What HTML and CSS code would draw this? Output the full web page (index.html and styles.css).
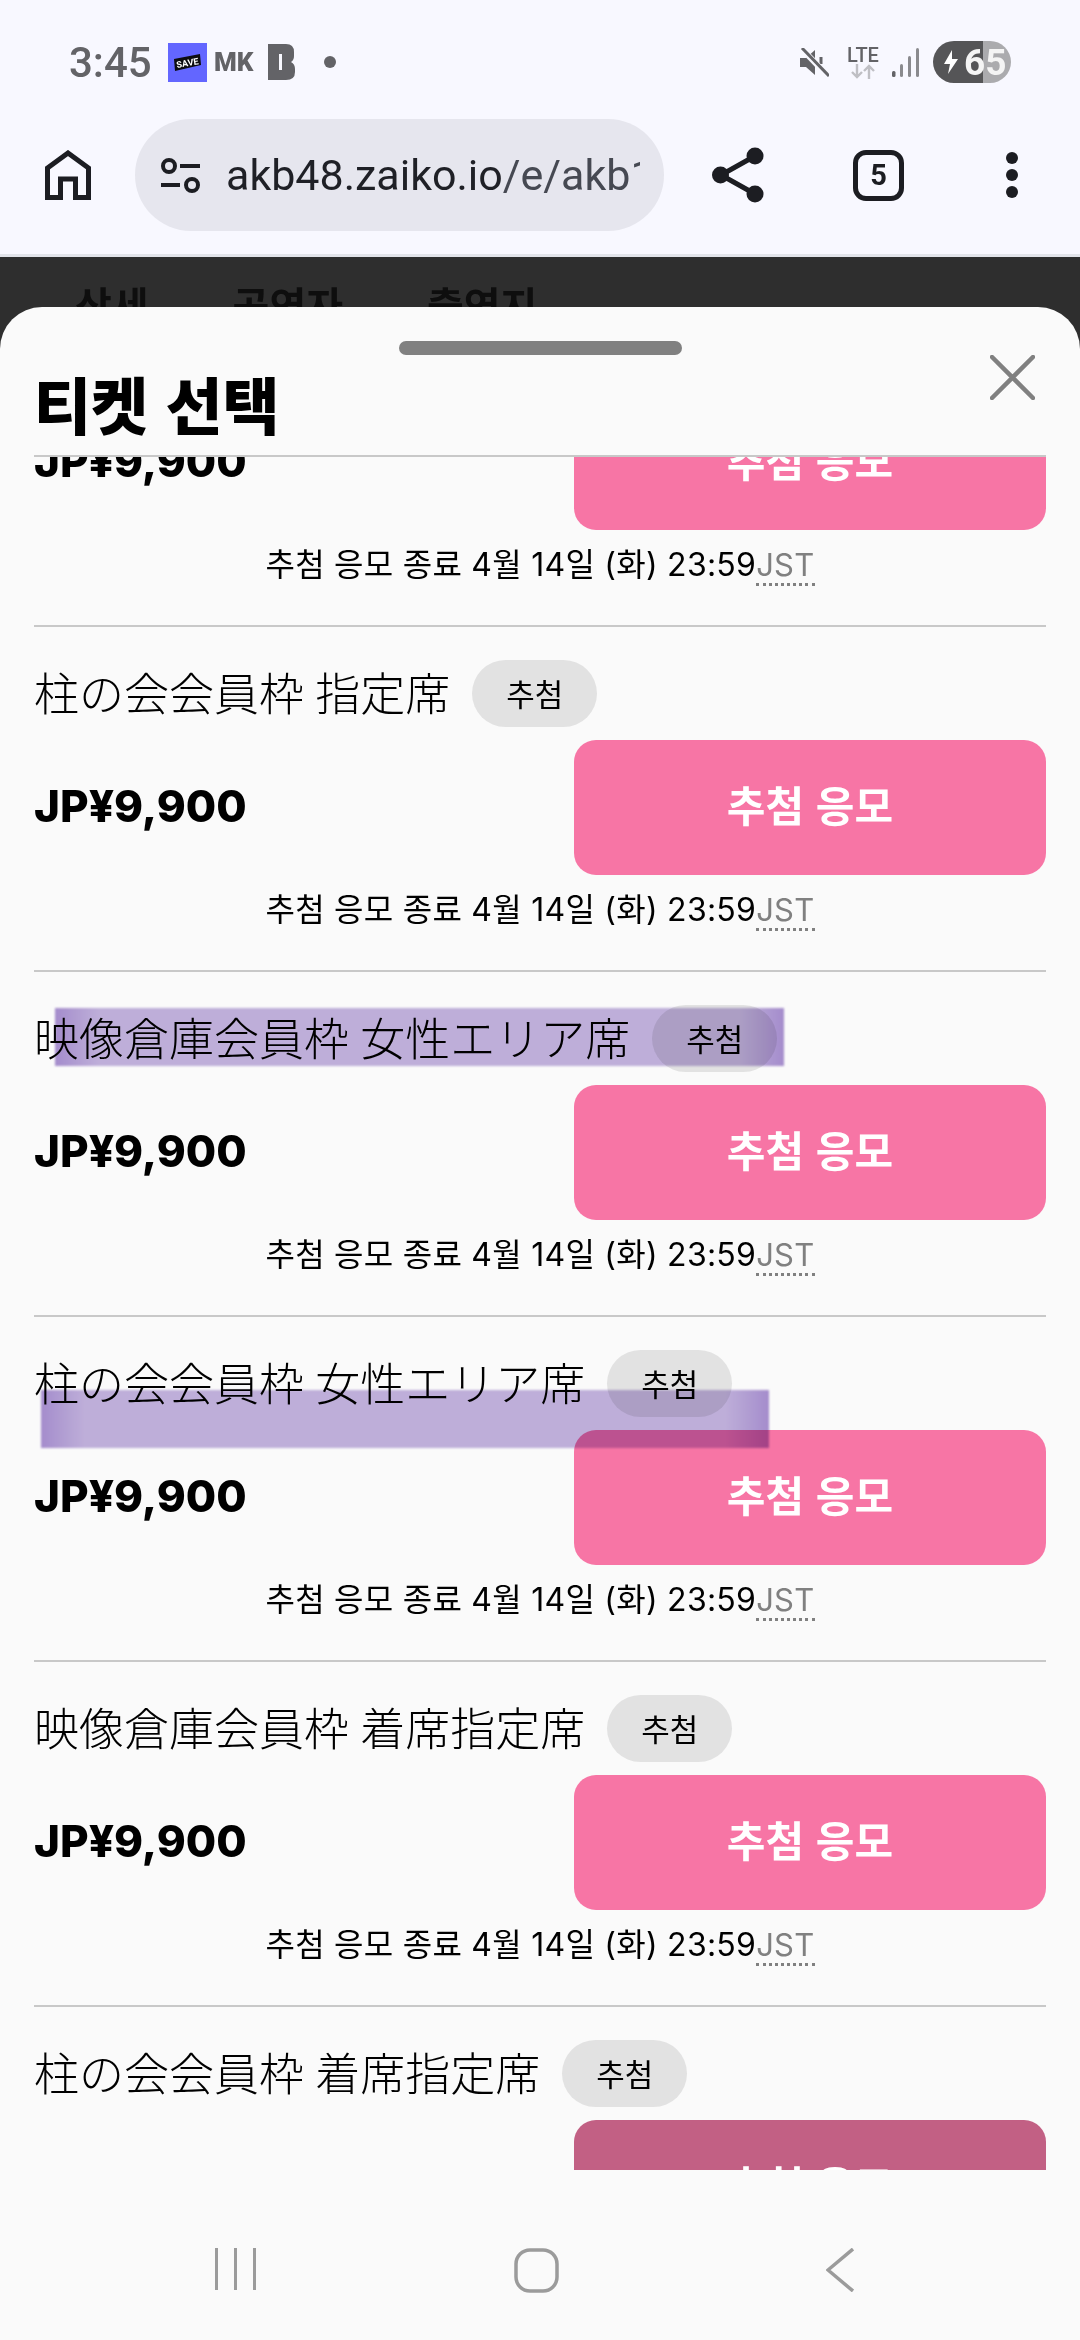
FILE: index.html
```html
<!DOCTYPE html>
<html lang="ko">
	<head>
		<meta charset="utf-8">
		<title>티켓 선택</title>
		<link rel="stylesheet" href="styles.css">
	</head>
	<body>
		<header class="chrome">
			<div class="status">
				<div class="status-left">
					<span class="time">3:45</span>
					<svg class="ic-save" width="39" height="39" viewBox="0 0 39 39">
						<rect width="39" height="39" fill="#6366ff"/>
						<polygon points="6,16 32,11 33,22 7,28" fill="#0c0c10"/>
						<text x="19.5" y="23" font-size="9" font-weight="700" font-family="Roboto" fill="#fff" text-anchor="middle" transform="rotate(-10 19.5 20)">SAVE</text>
					</svg>
					<span class="mk">MK</span>
					<svg class="ic-b" width="27" height="36" viewBox="0 0 27 36">
						<path d="M0 0H18Q26 0 26 8V12Q26 16 23 18Q27 20 27 25V28Q27 36 18 36H0Z" fill="#636367"/>
						<rect x="11" y="10" width="3" height="16" fill="#f8f8ff"/>
					</svg>
					<span class="dot"></span>
				</div>
				<div class="status-right">
					<svg width="29" height="29" viewBox="0 0 29 29">
						<path d="M0 10H6L15 2V27L6 19H0Z" fill="#636367"/>
						<path d="M21 9V16" stroke="#636367" stroke-width="3"/>
						<path d="M2 1L28 28" stroke="#f8f8ff" stroke-width="6"/>
						<path d="M2 0L29 28" stroke="#636367" stroke-width="3"/>
					</svg>
					<div class="lte">
						<span>LTE</span>
						<svg width="24" height="15" viewBox="0 0 24 15">
							<path d="M6 0V13M1 8L6 13L11 8M18 15V2M13 7L18 2L23 7" fill="none" stroke="#bfbfc4" stroke-width="2.4"/>
						</svg>
					</div>
					<svg class="ic-signal" width="27" height="29" viewBox="0 0 27 29">
						<rect x="0" y="23" width="3.5" height="6" rx="1.5" fill="#636367"/>
						<rect x="8" y="16" width="3" height="13" rx="1.5" fill="#8a8a8e"/>
						<rect x="16" y="8" width="3" height="21" rx="1.5" fill="#8a8a8e"/>
						<rect x="24" y="0" width="3" height="29" rx="1.5" fill="#8a8a8e"/>
					</svg>
					<div class="battery">
						<svg width="14" height="24" viewBox="0 0 14 24"><path d="M8 0L0 14H6L4 24L14 9H8Z" fill="#fff"/></svg>
						<span class="battery-num">65</span>
					</div>
				</div>
			</div>
			<div class="toolbar">
				<svg class="ic-home" width="46" height="50" viewBox="0 0 46 50">
					<path d="M2.5 47.5V18L23 3L43.5 18V47.5H30.5V29H15.5V47.5Z" fill="none" stroke="#1c1d22" stroke-width="5"/>
				</svg>
				<div class="url">
					<svg width="42" height="35" viewBox="0 0 42 35">
						<circle cx="10" cy="8" r="6" fill="none" stroke="#1c1d22" stroke-width="4"/>
						<path d="M21 8H41M2 27H21" stroke="#1c1d22" stroke-width="4"/>
						<circle cx="33" cy="27" r="6" fill="none" stroke="#1c1d22" stroke-width="4"/>
					</svg>
					<div class="url-text">akb48.zaiko.io<span class="url-path">/e/akb1</span></div>
				</div>
				<svg class="ic-share" width="52" height="56" viewBox="0 0 52 56">
					<path d="M43 9L9 28L43 47" fill="none" stroke="#1c1d22" stroke-width="5"/>
					<circle cx="43" cy="9" r="8.5" fill="#1c1d22"/>
					<circle cx="8.5" cy="28" r="8.5" fill="#1c1d22"/>
					<circle cx="43" cy="47" r="8.5" fill="#1c1d22"/>
				</svg>
				<div class="tabs-count">5</div>
				<div class="more"><i></i><i></i><i></i></div>
			</div>
		</header>

		<div class="page">
			<nav class="page-tabs">
				<span>상세</span>
				<span>공연자</span>
				<span>출연지</span>
			</nav>
			<section class="sheet">
				<div class="handle"></div>
				<div class="sheet-head">
					<h1>티켓 선택</h1>
					<svg class="ic-close" width="45" height="45" viewBox="0 0 45 45">
						<path d="M2 2L43 43M43 2L2 43" stroke="#808080" stroke-width="4.5" stroke-linecap="round"/>
					</svg>
				</div>
				<div class="list">
					<div class="list-inner">
						<article class="ticket">
							<div class="ticket-name"><span>柱の会会員枠 指定席</span><em class="pill">추첨</em></div>
							<div class="ticket-buy"><b class="price">JP¥9,900</b><button class="apply">추첨 응모</button></div>
							<p class="deadline">추첨 응모 종료 4월 14일 (화) 23:59<abbr>JST</abbr></p>
						</article>
						<article class="ticket">
							<div class="ticket-name"><span>柱の会会員枠 指定席</span><em class="pill">추첨</em></div>
							<div class="ticket-buy"><b class="price">JP¥9,900</b><button class="apply">추첨 응모</button></div>
							<p class="deadline">추첨 응모 종료 4월 14일 (화) 23:59<abbr>JST</abbr></p>
						</article>
						<article class="ticket">
							<div class="ticket-name"><span>映像倉庫会員枠 女性エリア席</span><em class="pill">추첨</em></div>
							<div class="ticket-buy"><b class="price">JP¥9,900</b><button class="apply">추첨 응모</button></div>
							<p class="deadline">추첨 응모 종료 4월 14일 (화) 23:59<abbr>JST</abbr></p>
							<div class="redact redact-a"></div>
						</article>
						<article class="ticket">
							<div class="ticket-name"><span>柱の会会員枠 女性エリア席</span><em class="pill">추첨</em></div>
							<div class="ticket-buy"><b class="price">JP¥9,900</b><button class="apply">추첨 응모</button></div>
							<p class="deadline">추첨 응모 종료 4월 14일 (화) 23:59<abbr>JST</abbr></p>
							<div class="redact redact-b"></div>
						</article>
						<article class="ticket">
							<div class="ticket-name"><span>映像倉庫会員枠 着席指定席</span><em class="pill">추첨</em></div>
							<div class="ticket-buy"><b class="price">JP¥9,900</b><button class="apply">추첨 응모</button></div>
							<p class="deadline">추첨 응모 종료 4월 14일 (화) 23:59<abbr>JST</abbr></p>
						</article>
						<article class="ticket">
							<div class="ticket-name"><span>柱の会会員枠 着席指定席</span><em class="pill">추첨</em></div>
							<div class="ticket-buy"><b class="price">JP¥9,900</b><button class="apply apply-dim">추첨 응모</button></div>
						</article>
					</div>
				</div>
				<footer class="navbar">
					<svg width="41" height="42" viewBox="0 0 41 42">
						<path d="M1.5 0V42M20.5 0V42M39.5 0V42" stroke="#9b9b9b" stroke-width="3"/>
					</svg>
					<svg class="nav-home" width="45" height="45" viewBox="0 0 45 45">
						<rect x="2" y="2" width="41" height="41" rx="14" fill="none" stroke="#9b9b9b" stroke-width="3.5"/>
					</svg>
					<svg width="28" height="44" viewBox="0 0 28 44">
						<path d="M27 1L2 22L27 43" fill="none" stroke="#9b9b9b" stroke-width="3.5"/>
					</svg>
				</footer>
			</section>
		</div>
	</body>
</html>
```

FILE: styles.css
```css
/*   #f8f8ff; /*browser bar*/
/*   #2e2e2e; /*page behind the sheet*/
/*   #fafafa; /*sheet*/
/*   #f775a5; /*button pink*/
*{
	box-sizing: border-box;
}
body{
	width:1080px;
	height:2340px;
	margin:0;
	display:flex;
	flex-direction:column;
	overflow:hidden;
	font-family:"Inter","Noto Sans CJK KR",sans-serif;
	color:#000;
	background-color:#fafafa;
}
.chrome{
	height:257px;
	padding-top:41px;
	background-color:#f8f8ff;
	border-bottom:3px solid #e2e4ea;
}

/* status bar */
.status{
	height:42px;
	padding:0 69px 0 69px;
	display:flex;
	justify-content:space-between;
	align-items:center;
}
.status-left{
	display:flex;
	align-items:center;
}
.time{
	width:99px;
	font-family:Roboto,sans-serif;
	font-size:42px;
	font-weight:500;
	color:#636367;
}
.mk{
	margin-left:7px;
	width:54px;
	font-family:Roboto,sans-serif;
	font-size:26px;
	font-weight:900;
	color:#636367;
}
.dot{
	width:12px;
	height:12px;
	margin-left:29px;
	border-radius:50%;
	background-color:#636367;
}
.status-right{
	display:flex;
	align-items:center;
}
.lte{
	width:34px;
	margin-left:17px;
	display:flex;
	flex-direction:column;
	align-items:center;
}
.lte span{
	font-family:Roboto,sans-serif;
	font-size:20px;
	font-weight:500;
	line-height:18px;
	color:#636367;
}
.ic-signal{
	margin-left:12px;
}
.battery{
	width:78px;
	height:42px;
	margin-left:14px;
	padding-left:11px;
	display:flex;
	align-items:center;
	gap:6px;
	border-radius:21px;
	background:linear-gradient(90deg,#555557 64%,#ababae 64%);
}
.battery-num{
	font-family:Roboto,sans-serif;
	font-size:37px;
	font-weight:700;
	color:#f4f4f4;
}

/* toolbar */
.toolbar{
	height:112px;
	margin-top:36px;
	padding-left:45px;
	display:flex;
	align-items:center;
}
.ic-home{
	flex:none;
}
.url{
	width:529px;
	height:112px;
	margin-left:44px;
	padding-left:24px;
	display:flex;
	align-items:center;
	border-radius:56px;
	background-color:#e6e6ee;
}
.url svg{
	flex:none;
}
.url-text{
	width:414px;
	margin-left:25px;
	overflow:hidden;
	white-space:nowrap;
	font-family:Roboto,sans-serif;
	font-size:43px;
	color:#1f2026;
}
.url-path{
	color:#464952;
}
.ic-share{
	margin-left:48px;
	flex:none;
}
.tabs-count{
	width:51px;
	height:51px;
	margin-left:89px;
	display:flex;
	align-items:center;
	justify-content:center;
	border:5px solid #1c1d22;
	border-radius:13px;
	font-family:Roboto,sans-serif;
	font-size:29px;
	font-weight:700;
	color:#1c1d22;
}
.more{
	margin-left:102px;
	display:flex;
	flex-direction:column;
	gap:5px;
}
.more i{
	width:12px;
	height:12px;
	border-radius:50%;
	background-color:#1c1d22;
}

/* page behind the sheet */
.page{
	flex:1;
	display:flex;
	flex-direction:column;
	min-height:0;
	background-color:#2e2e2e;
}
.page-tabs{
	height:50px;
	padding:25px 0 0 75px;
	display:flex;
	gap:84px;
	overflow:hidden;
	font-size:40px;
	font-weight:700;
	line-height:50px;
	color:#0e0e0e;
}
.sheet{
	flex:1;
	min-height:0;
	display:flex;
	flex-direction:column;
	border-radius:42px 42px 0 0;
	background-color:#fafafa;
}
.handle{
	flex:none;
	width:283px;
	height:14px;
	margin:34px auto 0;
	border-radius:7px;
	background-color:#808080;
}
.sheet-head{
	flex:none;
	height:102px;
	margin:0 34px;
	padding-right:11px;
	display:flex;
	justify-content:space-between;
	align-items:flex-start;
	border-bottom:2px solid #c8c8c8;
}
h1{
	margin:0;
	font-family:"Noto Sans CJK KR",sans-serif;
	font-size:62px;
	font-weight:900;
	line-height:96px;
}
.list{
	flex:1;
	min-height:0;
	overflow:hidden;
}
.list-inner{
	margin:-177px 34px 0;
}
.ticket{
	position:relative;
	height:345px;
	padding-top:33px;
	border-top:2px solid #c8c8c8;
}
.ticket:first-child{
	border-top-color:transparent;
}
.ticket-name{
	height:67px;
	display:flex;
	align-items:center;
	gap:22px;
	font-family:"Liberation Serif","Noto Sans CJK JP",serif;
	font-size:45px;
	font-weight:300;
	white-space:nowrap;
}
.ticket-name span{
	padding-bottom:5px;
}
.pill{
	width:125px;
	height:67px;
	padding-bottom:2px;
	display:flex;
	align-items:center;
	justify-content:center;
	border-radius:34px;
	background-color:#e2e2e2;
	font-family:"Noto Sans CJK KR",sans-serif;
	font-size:31px;
	font-style:normal;
	font-weight:400;
}
.ticket-buy{
	height:135px;
	margin-top:13px;
	display:flex;
	justify-content:space-between;
	align-items:center;
}
.price{
	padding-bottom:3px;
	font-family:Inter,sans-serif;
	font-size:44px;
	font-weight:800;
}
.apply{
	width:472px;
	height:135px;
	padding:0 0 8px;
	border:none;
	border-radius:22px;
	background-color:#f775a5;
	font-family:"Noto Sans CJK KR",sans-serif;
	font-size:42px;
	font-weight:700;
	color:#fff;
}
.apply-dim{
	background-color:#c26084;
}
.deadline{
	margin:0;
	padding-top:15px;
	text-align:center;
	font-family:Inter,"Noto Sans CJK KR",sans-serif;
	font-size:32px;
	letter-spacing:.25px;
	line-height:40px;
}
abbr{
	font-size:31px;
	color:#808080;
	border-bottom:3px dotted #808080;
}

/* purple marks laid over the names */
.redact{
	position:absolute;
	height:58px;
	pointer-events:none;
	mix-blend-mode:multiply;
	filter:blur(1px);
	background:linear-gradient(90deg,#a88fd0 0,#c2b2de 6%,#c2b2de 94%,#a88fd0 100%);
}
.redact-a{
	left:21px;
	top:36px;
	width:729px;
}
.redact-b{
	left:7px;
	top:73px;
	width:728px;
}

/* android nav */
.navbar{
	flex:none;
	height:170px;
	padding:78px 0 0 215px;
	display:flex;
	align-items:flex-start;
	background-color:#fafafa;
}
.nav-home{
	margin:0 267px 0 258px;
}
```
